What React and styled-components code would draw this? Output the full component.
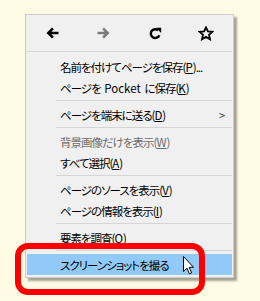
import React from 'react';
import styled, { createGlobalStyle } from 'styled-components';

const GlobalStyle = createGlobalStyle`
  body {
    margin: 0;
    background: #fffbe4;
    font-family: "Noto Sans CJK JP", "Noto Sans", sans-serif;
  }
`;

const Page = styled.div`
  position: relative;
  width: 260px;
  height: 301px;
  padding: 14px 0 0 25px;
  box-sizing: border-box;
`;

const Menu = styled.div`
  width: 209px;
  box-sizing: border-box;
  background: #f0f0f0;
  border: 1px solid #cccccc;
  box-shadow: 3px 3px 2px rgba(0, 0, 0, 0.35);
  padding-bottom: 2px;
`;

const Toolbar = styled.div`
  display: grid;
  grid-template-columns: repeat(4, 1fr);
  height: 36px;
  margin: 0 1px 4px;
  border-bottom: 1px solid #d5d5d5;
`;

const ToolButton = styled.div`
  display: flex;
  align-items: center;
  justify-content: center;
  color: ${(p) => (p.$disabled ? '#7a7a7a' : '#000')};
`;

const Item = styled.div`
  display: flex;
  align-items: center;
  height: 21px;
  margin: 0 1px;
  padding-left: 33px;
  padding-right: 10px;
  font-size: 11.5px;
  font-feature-settings: "palt";
  letter-spacing: -1px;
  color: ${(p) => (p.$disabled ? '#6d6d6d' : '#000')};
  background: ${(p) => (p.$active ? '#91c9f7' : 'transparent')};
  white-space: nowrap;
`;

const Label = styled.span`
  flex: 1;
`;

const Latin = styled.span`
  letter-spacing: 0;
  padding: 0 1px;
`;

const Key = styled.span`
  text-decoration: underline;
  text-underline-offset: 1px;
  letter-spacing: 0;
`;

const SubArrow = styled.span`
  font-size: 11px;
  color: #333;
  margin-right: -2px;
`;

const Separator = styled.div`
  height: 1px;
  margin: 2px 1px 3px 30px;
  background: #d5d5d5;
`;

const Highlight = styled.div`
  position: absolute;
  left: 15px;
  top: 243px;
  width: 190px;
  height: 52px;
  box-sizing: border-box;
  border: 6px solid #ff0000;
  border-radius: 13px;
`;

const Cursor = styled.svg`
  position: absolute;
  left: 183px;
  top: 256px;
`;

const BackIcon = () => (
  <svg width="13" height="12" viewBox="0 0 13 12">
    <path d="M0.5 6 L6 0.5 L7.8 2.3 L5.4 4.7 H12.5 V7.3 H5.4 L7.8 9.7 L6 11.5 Z" fill="currentColor" />
  </svg>
);

const ForwardIcon = () => (
  <svg width="13" height="12" viewBox="0 0 13 12">
    <path d="M12.5 6 L7 0.5 L5.2 2.3 L7.6 4.7 H0.5 V7.3 H7.6 L5.2 9.7 L7 11.5 Z" fill="currentColor" />
  </svg>
);

const ReloadIcon = () => (
  <svg width="13" height="13" viewBox="0 0 13 13">
    <path d="M10.3 8.2 A4.4 4.4 0 1 1 9.2 3.4" fill="none" stroke="currentColor" strokeWidth="2.4" />
    <path d="M7 0.8 H12.2 V6 Z" fill="currentColor" />
  </svg>
);

const StarIcon = () => (
  <svg width="16" height="15" viewBox="0 0 16 15">
    <path
      d="M8 1.3 L9.9 5.4 L14.4 5.8 L11 8.8 L12 13.3 L8 10.9 L4 13.3 L5 8.8 L1.6 5.8 L6.1 5.4 Z"
      fill="none"
      stroke="currentColor"
      strokeWidth="1.8"
      strokeLinejoin="miter"
    />
  </svg>
);

const items = [
  { label: '名前を付けてページを保存(', key: 'P', tail: ')...' },
  { label: <>ページを<Latin> Pocket </Latin>に保存(</>, key: 'K', tail: ')' },
  'sep',
  { label: 'ページを端末に送る(', key: 'D', tail: ')', sub: true },
  'sep',
  { label: '背景画像だけを表示(', key: 'W', tail: ')', disabled: true },
  { label: 'すべて選択(', key: 'A', tail: ')' },
  'sep',
  { label: 'ページのソースを表示(', key: 'V', tail: ')' },
  { label: 'ページの情報を表示(', key: 'I', tail: ')' },
  'sep',
  { label: '要素を調査(', key: 'Q', tail: ')' },
  'sep',
  { label: 'スクリーンショットを撮る', active: true },
];

export default function App() {
  return (
    <>
      <GlobalStyle />
      <Page>
        <Menu>
          <Toolbar>
            <ToolButton><BackIcon /></ToolButton>
            <ToolButton $disabled><ForwardIcon /></ToolButton>
            <ToolButton><ReloadIcon /></ToolButton>
            <ToolButton><StarIcon /></ToolButton>
          </Toolbar>
          {items.map((it, i) =>
            it === 'sep' ? (
              <Separator key={i} />
            ) : (
              <Item key={i} $disabled={it.disabled} $active={it.active}>
                <Label>
                  {it.label}
                  {it.key && <Key>{it.key}</Key>}
                  {it.tail}
                </Label>
                {it.sub && <SubArrow>&gt;</SubArrow>}
              </Item>
            )
          )}
        </Menu>
        <Highlight />
        <Cursor width="11" height="19" viewBox="0 0 11 19">
          <path
            d="M0.5 0.5 V15.5 L4 12.2 L6.4 17.8 L8.6 16.8 L6.2 11.3 H10.5 Z"
            fill="#fff"
            stroke="#000"
            strokeWidth="1"
            strokeLinejoin="miter"
          />
        </Cursor>
      </Page>
    </>
  );
}
